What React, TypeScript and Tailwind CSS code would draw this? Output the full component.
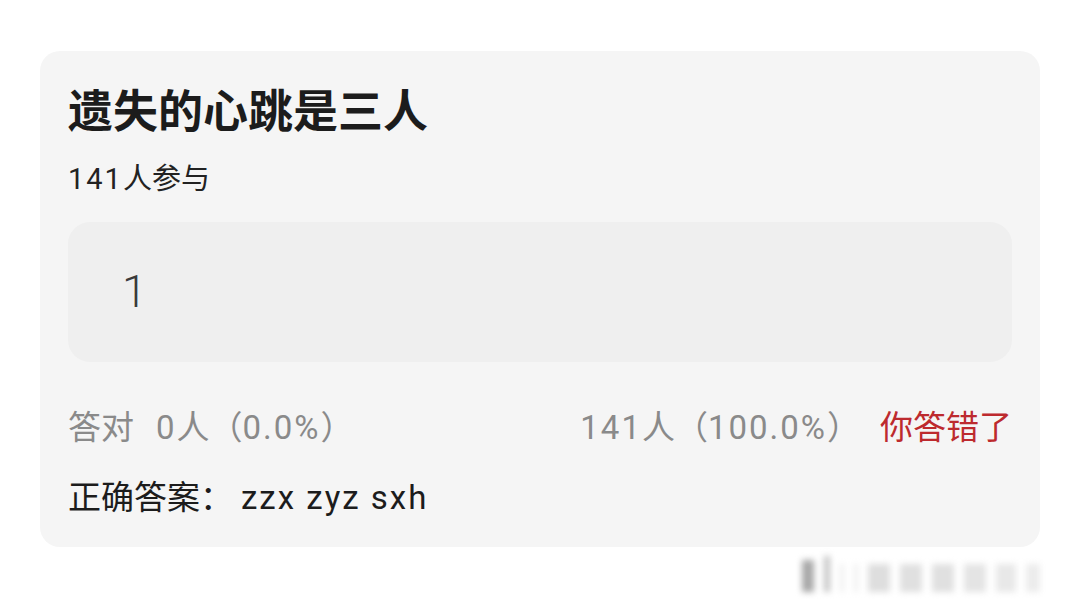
import * as React from 'react';

const font = { fontFamily: 'Roboto, "Noto Sans CJK SC", "Noto Sans", sans-serif' };

/* latin runs set a touch wider than Roboto's default */
function Latin({ children, className = '' }: { children: React.ReactNode; className?: string }) {
    return <span className={`tracking-[2px] ${className}`}>{children}</span>;
}

function Watermark() {
    // blurred-out site mark in the lower right corner
    const bars = [
        'w-[12px] h-[32px] bg-[#a8a8a8]',
        'w-[6px] h-[36px] bg-[#c4c4c4]',
        'w-[4px] h-[28px] bg-[#ededed]',
        'w-[4px] h-[28px] bg-[#ededed]',
        'w-[22px] h-[28px] bg-[#dedede]',
        'w-[22px] h-[28px] bg-[#e0e0e0]',
        'w-[22px] h-[28px] bg-[#e0e0e0]',
        'w-[22px] h-[28px] bg-[#e4e4e4]',
        'w-[20px] h-[28px] bg-[#e8e8e8]',
        'w-[14px] h-[28px] bg-[#ececec]',
    ];

    return (
        <div className="absolute left-[802px] top-[556px] flex items-end gap-[10px] blur-[3px]">
            {bars.map((b, i) => (
                <div key={i} className={b} />
            ))}
        </div>
    );
}

export default function App() {
    return (
        <div className="relative w-[1080px] h-[599px] bg-white overflow-hidden" style={font}>
            <div className="pt-[51px] pl-[40px]">
                <div className="w-[1000px] h-[496px] rounded-[20px] bg-[#f5f5f5] px-[28px] pt-[35px]">
                    <h1 className="text-[45px] leading-[54px] font-bold text-[#1c1c1c]">
                        遗失的心跳是三人
                    </h1>

                    <div className="mt-[21px] text-[29px] leading-[36px] text-[#222]">
                        <Latin>141</Latin>人参与
                    </div>

                    <div className="mt-[25px] h-[140px] rounded-[22px] bg-[#efefef] flex items-center pl-[54px]">
                        <span className="text-[45px] text-[#3a3a3a] font-light">1</span>
                    </div>

                    <div className="mt-[46px] flex items-center justify-between text-[33px] leading-[40px] text-[#8a8a8a]">
                        <div className="flex items-center gap-[22px]">
                            <span>答对</span>
                            <span><Latin>0</Latin>人（<Latin>0.0%</Latin>）</span>
                        </div>
                        <div className="flex items-center gap-[20px]">
                            <span><Latin>141</Latin>人（<Latin>100.0%</Latin>）</span>
                            <span className="text-[#bd2a2e]">你答错了</span>
                        </div>
                    </div>

                    <div className="mt-[30px] text-[33px] leading-[40px] text-[#1c1c1c]">
                        正确答案：<Latin className="ml-[8px]">zzx zyz sxh</Latin>
                    </div>
                </div>
            </div>

            <Watermark />
        </div>
    );
}
